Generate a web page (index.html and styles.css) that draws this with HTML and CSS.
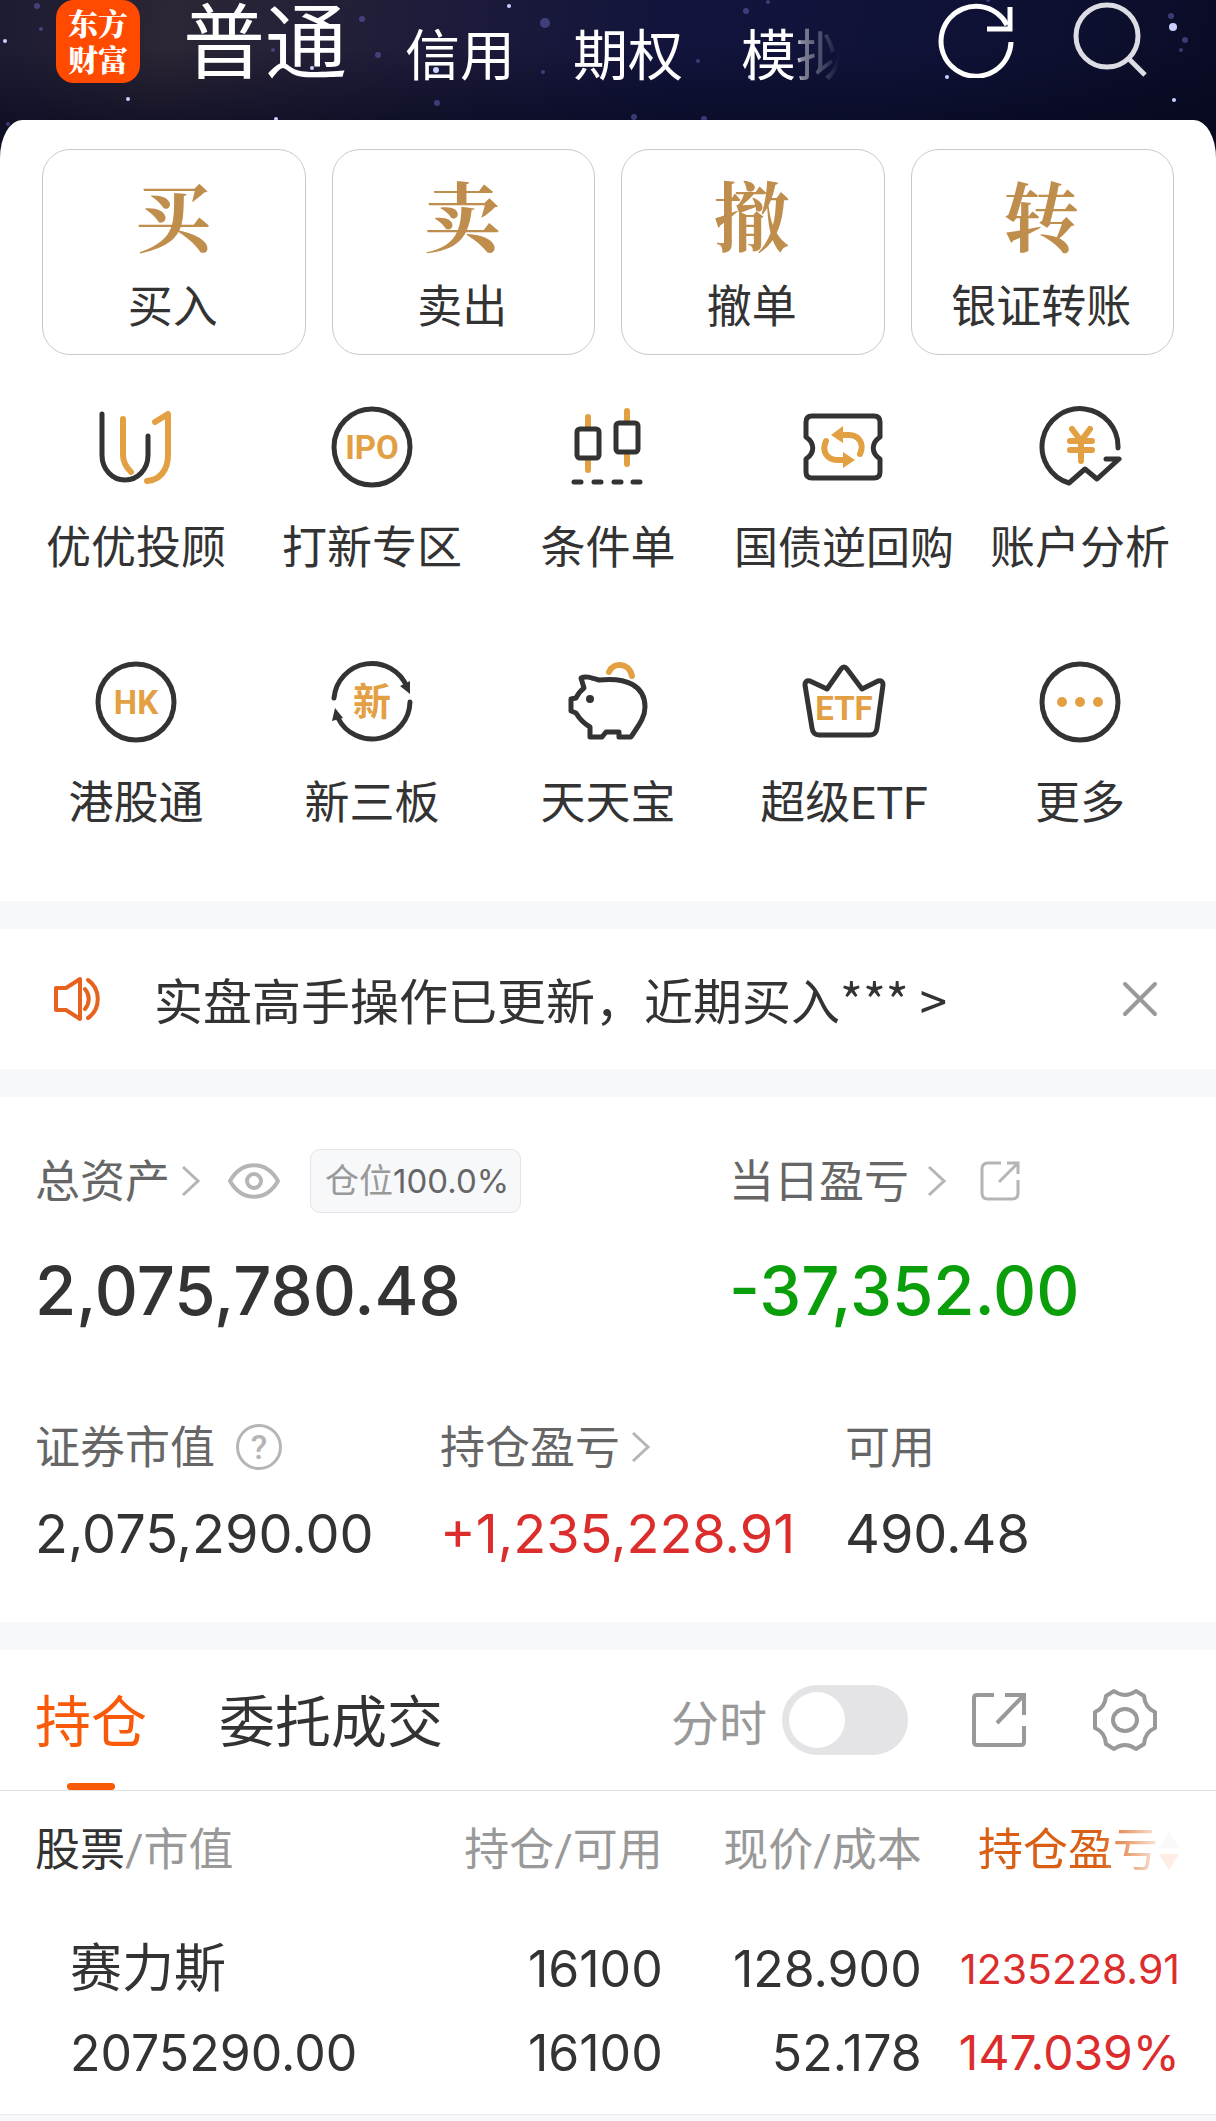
FILE: index.html
```html
<!DOCTYPE html>
<html lang="zh-CN">
<head>
<meta charset="utf-8">
<meta name="viewport" content="width=device-width, initial-scale=1">
<title>东方财富 - 普通交易</title>
<link rel="stylesheet" href="styles.css">
</head>
<body>
<header class="topbar">
  <svg class="sky" viewBox="0 0 1216 160" preserveAspectRatio="xMidYMin slice" aria-hidden="true">
    <g fill="#c9d0ff">
      <circle cx="5" cy="41" r="2"/><circle cx="128" cy="99" r="2"/><circle cx="509" cy="6" r="2"/>
      <circle cx="276" cy="119" r="2"/><circle cx="436" cy="70" r="3"/><circle cx="312" cy="68" r="2"/>
      <circle cx="1173" cy="27" r="4"/><circle cx="1174" cy="100" r="2"/><circle cx="947" cy="77" r="2"/>
      <circle cx="750" cy="77" r="2"/>
    </g>
    <g fill="#5a5aa8" opacity=".6">
      <circle cx="545" cy="23" r="5"/><circle cx="37" cy="6" r="3"/><circle cx="41" cy="29" r="2"/>
      <circle cx="362" cy="19" r="3"/><circle cx="273" cy="50" r="2"/><circle cx="378" cy="55" r="3"/>
      <circle cx="543" cy="72" r="2"/><circle cx="437" cy="103" r="3"/><circle cx="746" cy="11" r="3"/>
      <circle cx="768" cy="2" r="2"/><circle cx="698" cy="61" r="2"/><circle cx="1171" cy="16" r="3"/>
      <circle cx="1185" cy="40" r="3"/><circle cx="1181" cy="50" r="2"/><circle cx="988" cy="0" r="2"/>
      <circle cx="8" cy="124" r="2"/><circle cx="634" cy="117" r="3"/><circle cx="704" cy="119" r="3"/>
    </g>
  </svg>
  <a class="logo" href="#"><span>东方</span><span>财富</span></a>
  <nav class="modes">
    <a class="mode mode-active" href="#">普通</a>
    <a class="mode" href="#">信用</a>
    <a class="mode" href="#">期权</a>
    <a class="mode mode-faded" href="#">模拟</a>
  </nav>
  <div class="tools">
    <button class="icon-btn" type="button" aria-label="刷新">
      <svg width="76" height="76" viewBox="0 0 76 76" fill="none" stroke="#fff" stroke-width="5"><path d="M73 40A35 35 0 1 1 69 23"/><path d="M72 5v22H49"/></svg>
    </button>
    <button class="icon-btn" type="button" aria-label="搜索">
      <svg width="76" height="76" viewBox="0 0 76 76" fill="none" stroke="#dcdce4" stroke-width="5"><circle cx="35" cy="34" r="31"/><path d="M56 56l17 17"/></svg>
    </button>
  </div>
</header>

<main class="page">
  <section class="trade">
    <div class="cards">
      <a class="card" href="#"><span class="card-mark">买</span><span class="card-label">买入</span></a>
      <a class="card" href="#"><span class="card-mark">卖</span><span class="card-label">卖出</span></a>
      <a class="card" href="#"><span class="card-mark">撤</span><span class="card-label">撤单</span></a>
      <a class="card" href="#"><span class="card-mark">转</span><span class="card-label">银证转账</span></a>
    </div>
    <div class="shortcuts">
      <a class="shortcut" href="#">
        <svg class="glyph" viewBox="0 0 84 84"><path class="ink" d="M8 9v41c0 14 10 25 23 25s23-11 23-25V31"/><path class="gold" d="M29 14v36c0 7 3 12 8 17M61 17l13-8v41c0 15-8 25-21 26"/></svg>
        <span class="shortcut-label">优优投顾</span>
      </a>
      <a class="shortcut" href="#">
        <svg class="glyph" viewBox="0 0 84 84"><circle class="ink" cx="42" cy="42" r="38"/><text class="glyph-text" x="42" y="54">IPO</text></svg>
        <span class="shortcut-label">打新专区</span>
      </a>
      <a class="shortcut" href="#">
        <svg class="glyph" viewBox="0 0 84 84"><path class="gold" d="M22 12v10M22 55v10M61 6v10M61 49v10"/><rect class="ink" x="11" y="24" width="22" height="29" rx="3"/><rect class="ink" x="50" y="18" width="22" height="29" rx="3"/><path class="ink" d="M8 77h7M28 77h7M48 77h7M67 77h7"/></svg>
        <span class="shortcut-label">条件单</span>
      </a>
      <a class="shortcut" href="#">
        <svg class="glyph" viewBox="0 0 84 84"><path class="ink" d="M10 11h62q6 0 6 6v15c-9 6-9 16 0 22v13q0 6-6 6H10q-6 0-6-6V54c9-6 9-16 0-22V17q0-6 6-6z"/><path class="gold" d="M24 36c-5 11 2 19 11 19h7M58 49c5-11-2-19-11-19h-7"/><path class="gold-fill" d="M29 30l12-9v17zM53 55l-12-8v16z"/></svg>
        <span class="shortcut-label shortcut-label-long">国债逆回购</span>
      </a>
      <a class="shortcut" href="#">
        <svg class="glyph" viewBox="0 0 84 84"><path class="ink" d="M80 43A38 38 0 1 0 31 78l16-14 12 10 22-20H68"/><path class="gold" d="M34 24l9 12 9-12M32 36h22M32 45h22M43 36v20"/></svg>
        <span class="shortcut-label">账户分析</span>
      </a>
      <a class="shortcut" href="#">
        <svg class="glyph" viewBox="0 0 84 84"><circle class="ink" cx="42" cy="42" r="38"/><text class="glyph-text" x="42" y="54">HK</text></svg>
        <span class="shortcut-label">港股通</span>
      </a>
      <a class="shortcut" href="#">
        <svg class="glyph" viewBox="0 0 84 84"><path class="ink" d="M4 38A38 38 0 0 1 77 27M80 42A38 38 0 0 1 8 58"/><path class="ink-fill" d="M70 26l10-5v13zM2 61l3-13 8 10z"/><text class="glyph-text glyph-text-cjk" x="42" y="55">新</text></svg>
        <span class="shortcut-label">新三板</span>
      </a>
      <a class="shortcut" href="#">
        <svg class="glyph" viewBox="0 0 84 84"><path class="gold" d="M43 12c4-10 20-10 23 4"/><path class="ink" d="M15 18c4-2 8-1 18 2 28-3 46 6 46 27 0 11-7 19-14 30H53v-5H40l-4 5H24V67C17 63 13 58 10 53l-5-2V39l5-1c2-4 4-7 8-10z"/><circle class="ink-fill" cx="24" cy="39" r="4"/></svg>
        <span class="shortcut-label">天天宝</span>
      </a>
      <a class="shortcut" href="#">
        <svg class="glyph" viewBox="0 0 84 84"><path class="ink" d="M3 25q0-5 5-4l17 8L39 9q3-4 6 0l15 20 16-8q5-1 5 4l-6 43q-1 7-7 7H17q-6 0-7-7z"/><text class="glyph-text" x="42" y="60">ETF</text></svg>
        <span class="shortcut-label">超级ETF</span>
      </a>
      <a class="shortcut" href="#">
        <svg class="glyph" viewBox="0 0 84 84"><circle class="ink" cx="42" cy="42" r="38"/><g class="gold-fill"><circle cx="24" cy="42" r="5"/><circle cx="42" cy="42" r="5"/><circle cx="60" cy="42" r="5"/></g></svg>
        <span class="shortcut-label">更多</span>
      </a>
    </div>
  </section>

  <section class="notice">
    <svg width="48" height="48" viewBox="0 0 48 48" fill="none" stroke="#e8621f" stroke-width="4" stroke-linejoin="round" stroke-linecap="round" aria-hidden="true"><path d="M3 13h10L27 4v40L13 35H3z"/><path d="M32 14c5 6 5 14 0 20M35 5c13 9 13 29 0 38"/></svg>
    <a class="notice-text" href="#">实盘高手操作已更新，近期买入*** &gt;</a>
    <button class="icon-btn" type="button" aria-label="关闭">
      <svg width="36" height="36" viewBox="0 0 36 36" fill="none" stroke="#999" stroke-width="4" stroke-linecap="round"><path d="M3 3l30 30M33 3L3 33"/></svg>
    </button>
  </section>

  <section class="assets">
    <div class="totals">
      <div class="stat">
        <div class="stat-label"><span>总资产</span>
          <svg class="chevron" viewBox="0 0 20 32"><path d="M2 2l15 14L2 30"/></svg>
          <button class="icon-btn eye" type="button" aria-label="隐藏金额"><svg width="54" height="42" viewBox="0 0 54 42" fill="none" stroke="#b5b5b5" stroke-width="4"><path d="M3 21C15 0 39 0 51 21C39 42 15 42 3 21z" stroke-linejoin="round"/><circle cx="27" cy="21" r="7"/></svg></button>
          <div class="badge">仓位<b>100.0%</b></div>
        </div>
        <div class="stat-total">2,075,780.48</div>
      </div>
      <div class="stat">
        <div class="stat-label"><span>当日盈亏</span>
          <svg class="chevron chevron-spaced" viewBox="0 0 20 32"><path d="M2 2l15 14L2 30"/></svg>
          <button class="icon-btn share-small" type="button" aria-label="分享当日盈亏"><svg width="40" height="40" viewBox="0 0 40 40" fill="none" stroke="#b5b5b5" stroke-width="3"><path d="M21 2H8Q2 2 2 8v24q0 6 6 6h24q6 0 6-6V19M27 2h11v11M38 2L19 21"/></svg></button>
        </div>
        <div class="stat-total loss">-37,352.00</div>
      </div>
    </div>
    <div class="details">
      <div class="stat">
        <div class="stat-label"><span>证券市值</span>
          <button class="icon-btn help" type="button" aria-label="说明">?</button>
        </div>
        <div class="stat-value">2,075,290.00</div>
      </div>
      <div class="stat">
        <div class="stat-label"><span>持仓盈亏</span>
          <svg class="chevron" viewBox="0 0 20 32"><path d="M2 2l15 14L2 30"/></svg>
        </div>
        <div class="stat-value gain">+1,235,228.91</div>
      </div>
      <div class="stat">
        <div class="stat-label"><span>可用</span></div>
        <div class="stat-value">490.48</div>
      </div>
    </div>
  </section>

  <section class="holdings">
    <div class="tabs">
      <a class="tab tab-active" href="#">持仓</a>
      <a class="tab" href="#">委托成交</a>
      <label class="toggle">分时<input class="switch" type="checkbox" role="switch"></label>
      <button class="icon-btn share" type="button" aria-label="分享持仓"><svg width="54" height="54" viewBox="0 0 54 54" fill="none" stroke="#999" stroke-width="4"><path d="M22 2H5Q2 2 2 5v44q0 3 3 3h44q3 0 3-3V33M33 2h19v20M52 2L25 30"/></svg></button>
      <button class="icon-btn" type="button" aria-label="设置"><svg width="66" height="66" viewBox="0 0 66 66" fill="none" stroke="#999" stroke-width="4" stroke-linejoin="round"><path d="M22 4q11 8 22 0l8 5q1 12 11 16v16q-10 4-11 16l-8 5q-11-8-22 0l-8-5Q13 45 3 41V25Q13 21 14 9z"/><ellipse cx="33" cy="33" rx="12" ry="11"/></svg></button>
    </div>
    <table class="positions">
      <colgroup><col class="col-name"><col class="col-qty"><col class="col-price"><col></colgroup>
      <thead>
        <tr>
          <th scope="col"><span class="strong">股票</span>/市值</th>
          <th scope="col">持仓/可用</th>
          <th scope="col">现价/成本</th>
          <th scope="col"><span class="sorted">持仓盈亏<svg width="22" height="40" viewBox="0 0 22 40" aria-hidden="true"><path d="M1 17L11 1l10 16z" fill="#c8ccd6"/><path d="M1 23h20L11 39z" fill="#f0672a"/></svg></span></th>
        </tr>
      </thead>
      <tbody>
        <tr>
          <td><span class="line name">赛力斯</span><span class="line">2075290.00</span></td>
          <td><span class="line">16100</span><span class="line">16100</span></td>
          <td><span class="line">128.900</span><span class="line">52.178</span></td>
          <td class="gain"><span class="line amount">1235228.91</span><span class="line rate">147.039%</span></td>
        </tr>
      </tbody>
    </table>
  </section>
</main>
</body>
</html>
```
FILE: styles.css
```css
* { box-sizing: border-box; }

body {
  margin: 0;
  background: #f7f8fa;
  color: #333;
  font-family: Roboto, "Noto Sans CJK SC", sans-serif;
}

a { color: inherit; text-decoration: none; }

.icon-btn {
  display: flex;
  padding: 0;
  border: 0;
  background: none;
}

/* Top bar */
.topbar {
  position: relative;
  display: flex;
  align-items: flex-start;
  height: 160px;
  padding: 0 68px 0 56px;
  background:
    linear-gradient(180deg, rgba(6, 8, 30, 0) 30%, rgba(6, 8, 30, .6) 75%),
    linear-gradient(100deg, #1c1b33 0%, #2c2635 14%, #1e1c3a 34%, #12143c 55%, #101338 74%, #0a0c26 100%);
  color: #fff;
  overflow: hidden;
}

.sky {
  position: absolute;
  inset: 0;
  width: 100%;
  height: 100%;
}

.logo {
  position: relative;
  display: flex;
  flex-direction: column;
  align-items: center;
  justify-content: center;
  width: 84px;
  height: 83px;
  padding-bottom: 4px;
  border-radius: 18px;
  background: #ff4a00;
  font-family: "Noto Serif CJK SC", "Noto Sans CJK SC", sans-serif;
  font-size: 30px;
  font-weight: 900;
  line-height: 36px;
}

.modes {
  position: relative;
  display: flex;
  align-items: flex-start;
  flex: 1;
  gap: 58px;
  margin-left: 43px;
}

.mode { margin-top: 14px; font-size: 55px; line-height: 84px; }
.mode-active { margin-top: 0; font-size: 82px; line-height: 88px; }
.mode-faded {
  -webkit-mask-image: linear-gradient(90deg, #000 50%, rgba(0, 0, 0, .5) 55%, transparent 90%);
  mask-image: linear-gradient(90deg, #000 50%, rgba(0, 0, 0, .5) 55%, transparent 90%);
}

.tools {
  position: relative;
  display: flex;
  gap: 58px;
  margin-top: 2px;
}

/* Trade entry points */
.page {
  position: relative;
  display: flex;
  flex-direction: column;
  gap: 28px;
  margin-top: -40px;
}

.page > section { background: #fff; }

.trade { padding: 29px 0 66px; }
.page > .trade { border-radius: 22px 22px 0 0 / 38px 38px 0 0; }

.cards {
  display: grid;
  grid-template-columns: repeat(4, 1fr);
  gap: 26px;
  padding: 0 42px;
}

.card {
  display: flex;
  flex-direction: column;
  align-items: center;
  height: 206px;
  padding: 24px 2px 0 0;
  border: 1px solid #cfc8c0;
  border-radius: 28px;
}

.card-mark {
  color: #bf8d4c;
  font-family: "Noto Serif CJK SC", "Noto Sans CJK SC", serif;
  font-size: 76px;
  font-weight: 700;
  line-height: 80px;
}

.card-label { margin-top: 24px; font-size: 45px; line-height: 60px; }

.shortcuts {
  display: grid;
  grid-template-columns: repeat(5, 1fr);
  row-gap: 80px;
  padding: 50px 18px 0;
}

.shortcut { display: flex; flex-direction: column; align-items: center; gap: 29px; }
.glyph { width: 84px; height: 84px; }
.ink, .gold { fill: none; stroke: #333; stroke-width: 5; stroke-linecap: round; stroke-linejoin: round; }
.gold { stroke: #e3a043; stroke-width: 6; }
.gold-fill { fill: #e3a043; }
.ink-fill { fill: #333; }
.glyph-text { fill: #e3a043; font-size: 33px; font-weight: 700; text-anchor: middle; }
.glyph-text-cjk { font-size: 38px; }
.shortcut-label { font-size: 45px; line-height: 62px; white-space: nowrap; }
.shortcut-label-long { font-size: 44px; }

/* Notice */
.notice {
  display: flex;
  align-items: center;
  height: 140px;
  padding: 0 58px 0 53px;
}
.notice-text { flex: 1; margin-left: 53px; font-family: "Noto Sans CJK SC", sans-serif; font-size: 49px; line-height: 64px; }

/* Assets */
.assets { padding: 52px 35px; }
.totals { display: grid; grid-template-columns: 694fr 452fr; }
.details { display: grid; grid-template-columns: 405fr 405fr 336fr; margin-top: 77px; }
.stat-label { display: flex; align-items: center; height: 64px; color: #666; font-size: 45px; line-height: 60px; white-space: nowrap; }
.stat-label > span { padding-top: 3px; }
.stat-total, .stat-value, .line, .badge b { font-family: Inter, "Noto Sans CJK SC", sans-serif; }
.stat-total { margin-top: 31px; font-size: 67px; font-weight: 500; line-height: 94px; }
.stat-value { margin-top: 19px; font-size: 54px; line-height: 72px; }
.loss { color: #0a9f0a; }
.gain { color: #dc2d2d; }

.chevron { width: 20px; height: 32px; margin-left: 11px; fill: none; stroke: #b5b5b5; stroke-width: 3; }
.chevron-spaced { margin-left: 18px; }
.eye { margin-left: 26px; }
.share-small { margin-left: 33px; }

.badge {
  height: 64px;
  margin-left: 29px;
  padding: 0 11px 0 14px;
  border: 1px solid #e4e4e8;
  border-radius: 10px;
  background: #f7f8fa;
  color: #999;
  font-size: 34px;
  line-height: 62px;
}
.badge b { color: #666; font-size: 33px; font-weight: 400; }

.help {
  align-items: center;
  justify-content: center;
  width: 46px;
  height: 46px;
  margin-left: 21px;
  border: 3px solid #b5b5b5;
  border-radius: 50%;
  color: #b5b5b5;
  font: 500 34px Roboto, sans-serif;
}

/* Holdings */
.tabs {
  display: flex;
  align-items: center;
  height: 141px;
  padding: 0 58px 0 35px;
  border-bottom: 1px solid #e0e0e0;
}

.tab { position: relative; margin-right: 72px; padding-top: 6px; font-size: 56px; line-height: 134px; }
.tab-active { color: #f95a0a; }
.tab-active::after {
  content: "";
  position: absolute;
  bottom: 0;
  left: calc(50% - 24px);
  width: 48px;
  height: 7px;
  border-radius: 4px;
  background: #f95a0a;
}

.toggle { display: flex; align-items: center; gap: 15px; margin-left: auto; color: #999; font-size: 48px; }

.switch {
  appearance: none;
  width: 126px;
  height: 70px;
  margin: 0;
  padding: 7px;
  border-radius: 35px;
  background: #e4e4e6;
}
.switch::before {
  content: "";
  display: block;
  width: 56px;
  height: 56px;
  border-radius: 50%;
  background: #fff;
}
.switch:checked { background: #f95a0a; }
.switch:checked::before { margin-left: auto; }

.share { margin: 0 66px 0 64px; }

.positions { width: 100%; table-layout: fixed; border-collapse: collapse; border-bottom: 1px solid #e8e8ea; }
.col-name { width: 33%; }
.col-qty { width: 21.5%; }
.col-price { width: 21.3%; }
.positions th { height: 121px; padding: 0 0 2px; color: #999; font-size: 45px; font-weight: 400; line-height: 60px; text-align: right; white-space: nowrap; }
.positions td { padding: 15px 0 19px; font-size: 50px; text-align: right; }
.positions th:first-child { padding-left: 35px; text-align: left; }
.positions td:first-child { padding-left: 70px; text-align: left; }
.positions th:last-child, .positions td:last-child { padding-right: 36px; }
.strong { color: #333; }
.line { display: block; line-height: 84px; }
.name { font-size: 52px; }
.amount { font-size: 41px; }
.rate { font-size: 48px; }

/* Last header runs under the scroll fade */
.sorted {
  display: inline-flex;
  align-items: center;
  color: #d95f14;
  -webkit-mask-image: linear-gradient(90deg, #000 60%, rgba(0, 0, 0, .12) 90%);
  mask-image: linear-gradient(90deg, #000 60%, rgba(0, 0, 0, .12) 90%);
}
```
